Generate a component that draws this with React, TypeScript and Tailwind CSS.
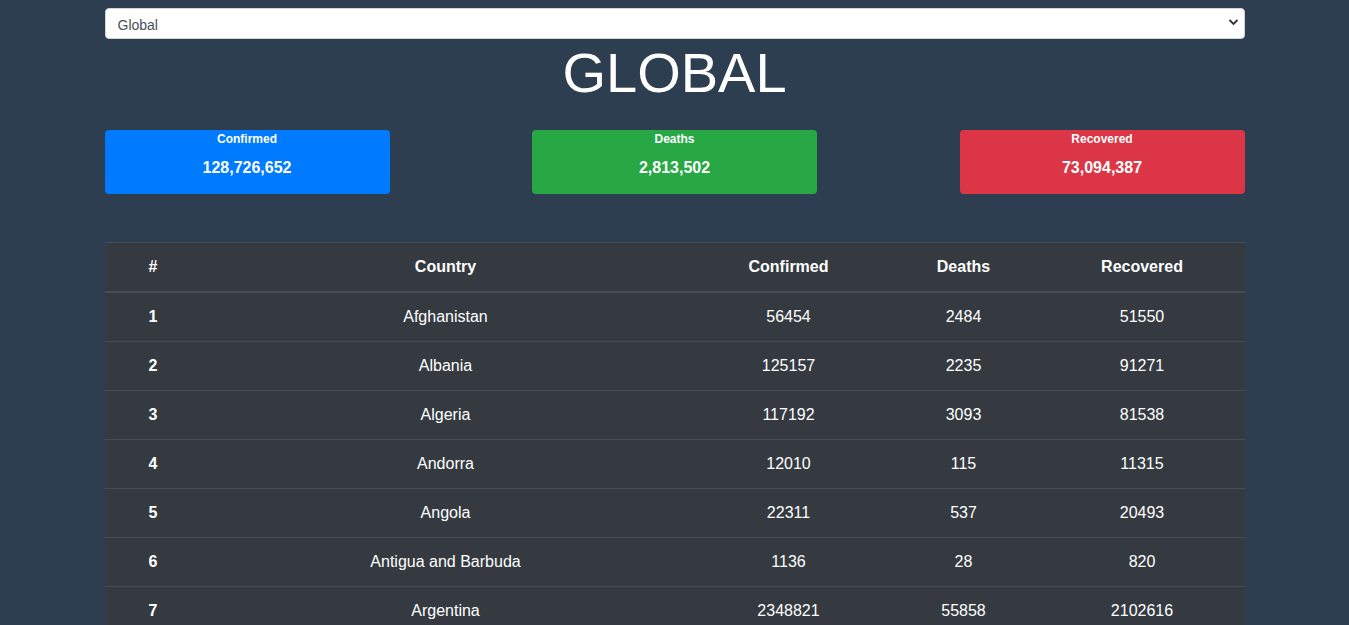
import React, { useState } from "react";

const ROWS = [
  { country: "Afghanistan", confirmed: 56454, deaths: 2484, recovered: 51550 },
  { country: "Albania", confirmed: 125157, deaths: 2235, recovered: 91271 },
  { country: "Algeria", confirmed: 117192, deaths: 3093, recovered: 81538 },
  { country: "Andorra", confirmed: 12010, deaths: 115, recovered: 11315 },
  { country: "Angola", confirmed: 22311, deaths: 537, recovered: 20493 },
  { country: "Antigua and Barbuda", confirmed: 1136, deaths: 28, recovered: 820 },
  { country: "Argentina", confirmed: 2348821, deaths: 55858, recovered: 2102616 },
  { country: "Armenia", confirmed: 195758, deaths: 3571, recovered: 179102 },
  { country: "Australia", confirmed: 29276, deaths: 909, recovered: 23255 },
];

const CARDS = [
  { label: "Confirmed", value: "128,726,652", color: "bg-[#007bff]" },
  { label: "Deaths", value: "2,813,502", color: "bg-[#28a745]" },
  { label: "Recovered", value: "73,094,387", color: "bg-[#dc3545]" },
];

export default function App() {
  const [region, setRegion] = useState("Global");

  return (
    <div className="min-h-screen bg-[#2c3e50] font-['Liberation_Sans',Arial,sans-serif]">
      <div className="mx-auto w-[1140px] pt-2">
        {/* region picker */}
        <div className="relative">
          <select
            value={region}
            onChange={(e) => setRegion(e.target.value)}
            className="block h-[31px] w-full appearance-none rounded-[4px] border border-[#ced4da] bg-white pt-[3px] pl-3 text-[14px] text-[#495057] outline-none"
          >
            <option>Global</option>
            <option>Afghanistan</option>
            <option>Albania</option>
          </select>
          <svg
            className="pointer-events-none absolute right-[6px] top-[10px] h-[8px] w-[11px]"
            viewBox="0 0 11 8"
            fill="none"
          >
            <path d="M1.5 2l4 4 4-4" stroke="#333" strokeWidth="1.8" />
          </svg>
        </div>

        <h1 className="text-center text-[56px] leading-[1.2] font-normal text-white">
          {region.toUpperCase()}
        </h1>

        {/* totals */}
        <div className="mt-[24px] flex justify-between">
          {CARDS.map((c) => (
            <div
              key={c.label}
              className={`${c.color} flex h-[64px] w-[285px] flex-col items-center rounded-[4px] text-white`}
            >
              <span className="text-[12px] leading-[18px] font-bold">{c.label}</span>
              <span className="mt-[8px] text-[16px] leading-[24px] font-bold">{c.value}</span>
            </div>
          ))}
        </div>

        {/* country table */}
        <table className="mt-[48px] w-full table-fixed border-collapse bg-[#343a40] text-[16px] text-white">
          <colgroup>
            <col className="w-[97px]" />
            <col className="w-[488px]" />
            <col className="w-[198px]" />
            <col className="w-[152px]" />
            <col className="w-[205px]" />
          </colgroup>
          <thead>
            <tr className="border-t border-b-2 border-[#454d55]">
              <th className="py-3 leading-6">#</th>
              <th className="py-3 leading-6">Country</th>
              <th className="py-3 leading-6">Confirmed</th>
              <th className="py-3 leading-6">Deaths</th>
              <th className="py-3 leading-6">Recovered</th>
            </tr>
          </thead>
          <tbody>
            {ROWS.map((r, i) => (
              <tr key={r.country} className="border-b border-[#454d55] text-center">
                <th className="py-3 leading-6 font-bold">{i + 1}</th>
                <td className="py-3 leading-6">{r.country}</td>
                <td className="py-3 leading-6">{r.confirmed}</td>
                <td className="py-3 leading-6">{r.deaths}</td>
                <td className="py-3 leading-6">{r.recovered}</td>
              </tr>
            ))}
          </tbody>
        </table>
      </div>
    </div>
  );
}
